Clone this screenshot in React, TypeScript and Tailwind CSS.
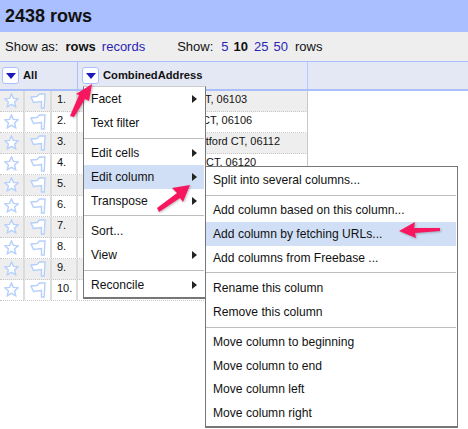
const rowsData = [
  { n: '1.', text: 'T, 06103', pad: 'pl-[127px]' },
  { n: '2.', text: 'CT, 06106', pad: 'pl-[124px]' },
  { n: '3.', text: 'rtford CT, 06112', pad: 'pl-[124px]' },
  { n: '4.', text: 'CT, 06120', pad: 'pl-[128px]' },
  { n: '5.', text: '', pad: '' },
  { n: '6.', text: '', pad: '' },
  { n: '7.', text: '', pad: '' },
  { n: '8.', text: '', pad: '' },
  { n: '9.', text: '', pad: '' },
  { n: '10.', text: '', pad: '' },
]

const Star = () => (
  <svg width="15" height="15" viewBox="0 0 15 15" fill="#fff" stroke="#b6d0fb" strokeWidth="1.4">
    <path d="M7.5 1l1.9 4.4 4.8.4-3.6 3.2 1.1 4.8-4.2-2.5-4.2 2.5 1.1-4.8L.8 5.8l4.8-.4z" />
  </svg>
)

const Flag = () => (
  <svg width="16" height="16" viewBox="0 0 16 16" fill="#fff" stroke="#b6d0fb" strokeWidth="1.4">
    <path d="M1 4L7 3.5 9.5 1 15 1 14.2 15 11.5 15 11.5 8.5 3.5 9.5z" />
  </svg>
)

const DownButton = () => (
  <div className="w-[17px] h-[17px] rounded-[3px] border border-[#a9bfff] bg-white flex items-center justify-center">
    <div className="w-0 h-0 border-x-[5px] border-x-transparent border-t-[6px] border-t-[#1a1ab8]" />
  </div>
)

const Caret = () => (
  <div className="w-0 h-0 border-y-[4.5px] border-y-transparent border-l-[5px] border-l-[#222] mr-[7px]" />
)

const Sep = () => <div className="h-px bg-[#bdbdbd] my-[3px]" />

const Item = ({ label, arrow, active }: { label: string; arrow?: boolean; active?: boolean }) => (
  <div className={`h-[23.6px] flex items-center justify-between pl-[7px] ${active ? 'bg-[#d0dff6]' : ''}`}>
    <span>{label}</span>
    {arrow && <Caret />}
  </div>
)

const Arrow = ({ className, box, points }: { className: string; box: string; points: string }) => (
  <svg className={`absolute drop-shadow-[1px_1px_1px_rgba(0,0,0,0.25)] ${className}`} viewBox={box} fill="#f8175f">
    <polygon points={points} />
  </svg>
)

export default function App() {
  return (
    <div className="relative w-[468px] h-[429px] overflow-hidden bg-white text-[#111] font-['Liberation_Sans',Arial,sans-serif] text-[12.1px]">
      <div className="h-[32px] bg-[#a9bfff] flex items-center pl-[5px] text-[18px] font-bold">2438 rows</div>

      <div className="h-[30px] bg-[#eeeeee] border-b border-[#a9bfff] flex items-center pl-[5px] text-[13px]">
        <span>Show as:</span>
        <b className="ml-[7px]">rows</b>
        <span className="ml-[6px] text-[#2a1fb5]">records</span>
        <span className="ml-[32px]">Show:</span>
        <span className="ml-[8px] text-[#2a1fb5]">5</span>
        <b className="ml-[5px]">10</b>
        <span className="ml-[6px] text-[#2a1fb5]">25</span>
        <span className="ml-[5px] text-[#2a1fb5]">50</span>
        <span className="ml-[7px]">rows</span>
      </div>

      <div className="h-[29px] bg-[#e4e8f5] border-b-2 border-[#a9bfff] flex text-[11.2px] font-bold">
        <div className="w-[78px] border-r border-[#a9bfff] flex items-center pl-[2px] gap-[4px]">
          <DownButton />
          <span>All</span>
        </div>
        <div className="w-[230px] border-r border-[#b8c9ff] flex items-center pl-[4px] gap-[4px]">
          <DownButton />
          <span>CombinedAddress</span>
        </div>
      </div>

      <div className="w-[308px] text-[11px]">
        {rowsData.map((row, i) => (
          <div key={row.n} className={`h-[21px] flex border-b border-dotted border-[#c8c8c8] ${i % 2 === 0 ? 'bg-[#eeeeee]' : 'bg-white'}`}>
            <div className="w-[25px] flex items-center justify-center border-r-2 border-[#dcdcdc] pb-[1px]">
              <Star />
            </div>
            <div className="w-[27px] flex items-center justify-center border-r-2 border-[#dcdcdc] pb-[1px]">
              <Flag />
            </div>
            <div className="w-[26px] flex items-center pl-[5px] pb-[3px] border-r-2 border-[#dcdcdc]">{row.n}</div>
            <div className={`flex-1 flex items-center pb-[3px] border-r border-[#c8c8c8] whitespace-nowrap ${row.pad}`}>{row.text}</div>
          </div>
        ))}
      </div>

      <div className="absolute left-[83px] top-[86px] w-[123px] h-[213px] bg-white border-l border-r border-b-2 border-[#777] border-t border-t-[#ccc] pr-[1px] pt-[0.5px]">
        <Item label="Facet" arrow />
        <Item label="Text filter" />
        <Sep />
        <Item label="Edit cells" arrow />
        <Item label="Edit column" arrow active />
        <Item label="Transpose" arrow />
        <Sep />
        <Item label="Sort..." />
        <Item label="View" arrow />
        <Sep />
        <Item label="Reconcile" arrow />
      </div>

      <div className="absolute left-[205px] top-[166px] w-[253px] h-[262px] bg-white border border-b-2 border-[#777] pr-[1px] pt-[1px]">
        <Item label="Split into several columns..." />
        <Sep />
        <Item label="Add column based on this column..." />
        <Item label="Add column by fetching URLs..." active />
        <Item label="Add columns from Freebase ..." />
        <Sep />
        <Item label="Rename this column" />
        <Item label="Remove this column" />
        <Sep />
        <Item label="Move column to beginning" />
        <Item label="Move column to end" />
        <Item label="Move column left" />
        <Item label="Move column right" />
      </div>

      <Arrow className="left-[66px] top-[80px] w-[30px] h-[40px]" box="0 0 30 40" points="26,4 23,21 19,19 8,37 4,36 13,15 10,14" />
      <Arrow className="left-[154px] top-[182px] w-[40px] h-[34px]" box="0 0 40 34" points="36,3 29,20 26,16 5,30 3,26 23,11 18,6" />
      <Arrow className="left-[396px] top-[218px] w-[48px] h-[24px]" box="0 0 48 24" points="3,13 19,4 18,10 44,10 44,13 19,15 20,20" />
    </div>
  )
}
